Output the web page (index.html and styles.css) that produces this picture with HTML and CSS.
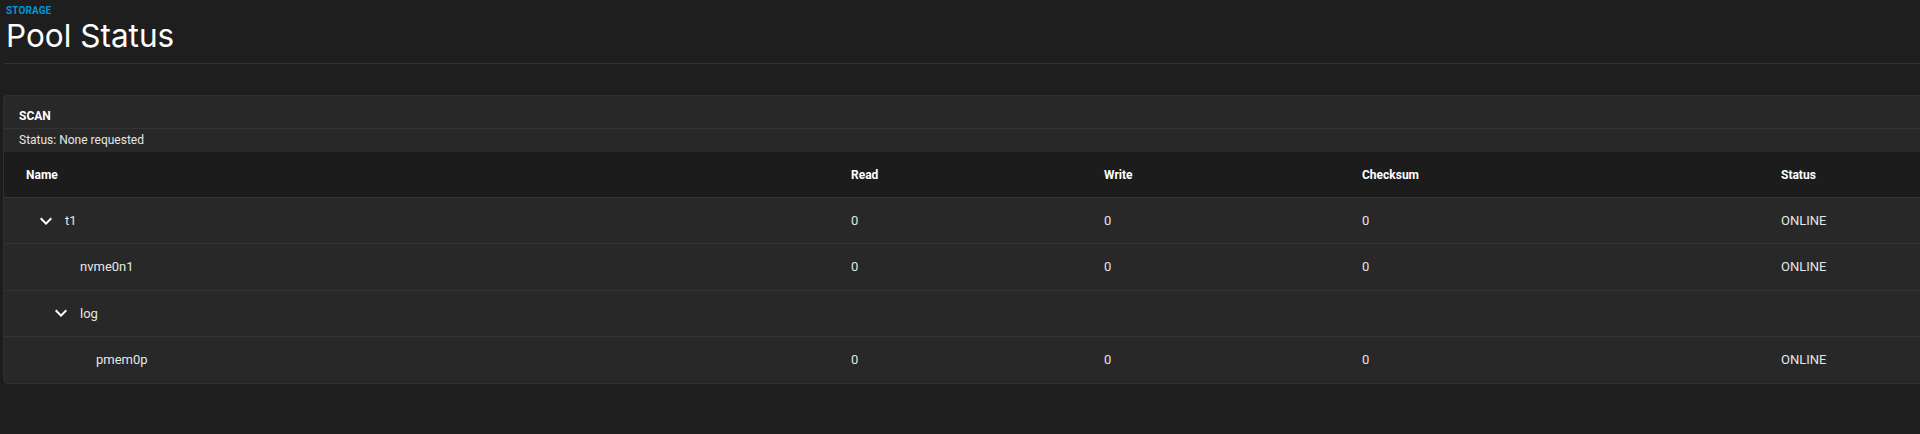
FILE: index.html
```html
<!DOCTYPE html>
<html lang="en">
<head>
<meta charset="utf-8">
<title>Pool Status</title>
<link rel="stylesheet" href="styles.css">
</head>
<body>
<div class="page">
  <header class="page-header">
    <div class="crumb">STORAGE</div>
    <h1 class="title">Pool Status</h1>
  </header>

  <section class="card">
    <div class="card-title">SCAN</div>
    <div class="scan-status">Status: None requested</div>

    <div class="table">
      <div class="tr thead">
        <div class="cell">Name</div>
        <div class="cell">Read</div>
        <div class="cell">Write</div>
        <div class="cell">Checksum</div>
        <div class="cell">Status</div>
      </div>

      <div class="tr">
        <div class="cell name lvl-0">
          <span class="toggle"><svg viewBox="0 0 24 24" width="24" height="24"><path d="M16.59 8.59L12 13.17 7.41 8.59 6 10l6 6 6-6z"/></svg></span>
          <span>t1</span>
        </div>
        <div class="cell">0</div>
        <div class="cell">0</div>
        <div class="cell">0</div>
        <div class="cell">ONLINE</div>
      </div>

      <div class="tr">
        <div class="cell name lvl-1">
          <span class="toggle"></span>
          <span>nvme0n1</span>
        </div>
        <div class="cell">0</div>
        <div class="cell">0</div>
        <div class="cell">0</div>
        <div class="cell">ONLINE</div>
      </div>

      <div class="tr">
        <div class="cell name lvl-1">
          <span class="toggle"><svg viewBox="0 0 24 24" width="24" height="24"><path d="M16.59 8.59L12 13.17 7.41 8.59 6 10l6 6 6-6z"/></svg></span>
          <span>log</span>
        </div>
        <div class="cell"></div>
        <div class="cell"></div>
        <div class="cell"></div>
        <div class="cell"></div>
      </div>

      <div class="tr last">
        <div class="cell name lvl-2">
          <span class="toggle"></span>
          <span>pmem0p</span>
        </div>
        <div class="cell">0</div>
        <div class="cell">0</div>
        <div class="cell">0</div>
        <div class="cell">ONLINE</div>
      </div>
    </div>
  </section>
</div>
</body>
</html>
```

FILE: styles.css
```css
html, body {
  margin: 0;
  padding: 0;
  overflow: hidden;
  background: #1e1e1e;
}

body {
  font-family: Roboto, "Liberation Sans", sans-serif;
  color: #e0e0e0;
}

.page {
  width: 1990px;
  padding: 0 0 0 3px;
}

.page-header {
  padding: 5px 0 0 2px;
  border-bottom: 1px solid #333333;
  margin-left: 1px;
  height: 58px;
}

.crumb {
  font-size: 10px;
  line-height: 12px;
  font-weight: 700;
  color: #0095d5;
  letter-spacing: 0.1px;
}

.title {
  margin: 1px 0 0 0;
  font-family: Inter, "Liberation Sans", sans-serif;
  font-size: 31.5px;
  line-height: 36px;
  font-weight: 400;
  color: #ffffff;
}

.card {
  margin-top: 31px;
  background: #282828;
  border: 1px solid #303030;
  border-radius: 4px;
  box-shadow: 0 2px 3px rgba(0, 0, 0, 0.35);
  overflow: hidden;
}

.card-title {
  padding: 13px 15px 5px;
  font-size: 12px;
  line-height: 14px;
  font-weight: 700;
  color: #ffffff;
  border-bottom: 1px solid #333333;
}

.scan-status {
  padding: 4px 15px 5px;
  font-size: 12px;
  line-height: 14px;
  color: #e6e6e6;
}

.table {
  display: flex;
  flex-direction: column;
}

.tr {
  display: grid;
  grid-template-columns: 825px 253px 258px 419px 1fr;
  align-items: center;
  height: 46.25px;
  box-sizing: border-box;
  border-bottom: 1px solid #333333;
  font-size: 13px;
  color: #e6e6e6;
}

.tr.last {
  border-bottom: none;
}

.thead {
  background: #1c1c1c;
  height: 46px;
  font-size: 12px;
  font-weight: 700;
  color: #ffffff;
}

.cell {
  padding-left: 22px;
  display: flex;
  align-items: center;
}

.name.lvl-1 {
  padding-left: 37px;
}

.name.lvl-2 {
  padding-left: 53px;
}

.toggle {
  width: 39px;
  height: 24px;
  flex: none;
  display: flex;
  align-items: center;
}

.toggle svg {
  margin-left: 8px;
  fill: #ffffff;
  display: block;
}
```
